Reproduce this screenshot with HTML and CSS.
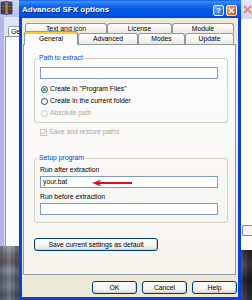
FILE: index.html
```html
<!DOCTYPE html>
<html>
<head>
<meta charset="utf-8">
<title>Advanced SFX options</title>
<link rel="stylesheet" href="styles.css">
</head>
<body>
<div class="desktop">
  <div class="win-left">
    <div class="wl-title">
      <svg class="wl-icon" width="13" height="14" viewBox="0 0 13 14">
        <rect x="1" y="1" width="11" height="3" fill="#7b3a8e" stroke="#222" stroke-width="0.6"/>
        <rect x="1" y="4" width="11" height="3" fill="#2f8f3a" stroke="#222" stroke-width="0.6"/>
        <rect x="1" y="7" width="11" height="3" fill="#c42b22" stroke="#222" stroke-width="0.6"/>
        <rect x="1" y="10" width="11" height="3" fill="#2c46a8" stroke="#222" stroke-width="0.6"/>
        <rect x="5" y="0.5" width="3" height="13" fill="#9a8a6a" stroke="#333" stroke-width="0.5"/>
      </svg>
    </div>
    <div class="wl-body">
      <div class="wl-tab">Ge</div>
      <div class="wl-panel"></div>
    </div>
  </div>
  <div class="photo photo-left"></div>

  <div class="win-right">
    <div class="wr-title">
      <svg width="9" height="9" viewBox="0 0 9 9"><path d="M1 1 L8 8 M8 1 L1 8" stroke="#e58a8a" stroke-width="2"/></svg>
    </div>
    <div class="wr-body"><div class="wr-btn"></div></div>
  </div>
  <div class="photo photo-right"></div>

  <div class="dialog">
    <div class="titlebar">
      <span class="title">Advanced SFX options</span>
      <div class="tb-btns">
        <span class="tb-btn tb-help">?</span>
        <span class="tb-btn tb-close">
          <svg width="7" height="7" viewBox="0 0 7 7"><path d="M1 1 L6 6 M6 1 L1 6" stroke="#fff" stroke-width="1.6"/></svg>
        </span>
      </div>
    </div>
    <div class="frame">
      <div class="tabs">
        <div class="tabrow upper">
          <div class="tab t-text">Text and icon</div>
          <div class="tab t-license">License</div>
          <div class="tab t-module">Module</div>
        </div>
        <div class="tabrow lower">
          <div class="tab sel t-general">General</div>
          <div class="tab t-advanced">Advanced</div>
          <div class="tab t-modes">Modes</div>
          <div class="tab t-update">Update</div>
        </div>
      </div>
      <div class="panel">
        <fieldset class="group g-path">
          <legend>Path to extract</legend>
          <div class="field"></div>
          <div class="opt first"><span class="radio on"></span><span>Create in "Program Files"</span></div>
          <div class="opt"><span class="radio"></span><span>Create in the current folder</span></div>
          <div class="opt disabled"><span class="radio off"></span><span>Absolute path</span></div>
        </fieldset>
        <div class="opt check disabled"><span class="checkbox">
          <svg width="5" height="5" viewBox="0 0 5 5"><path d="M0.5 2.5 L2 4 L4.5 0.8" stroke="#c6c3b4" stroke-width="1.1" fill="none"/></svg>
        </span><span>Save and restore paths</span></div>

        <fieldset class="group g-setup">
          <legend>Setup program</legend>
          <div class="lbl first">Run after extraction</div>
          <div class="field arrowed">your.bat
            <svg class="arrow" width="40" height="8" viewBox="0 0 40 8"><path d="M0 4 L9 0.8 L7.5 3 L40 3 L40 5 L7.5 5 L9 7.2 Z" fill="#d8121c"/></svg>
          </div>
          <div class="lbl">Run before extraction</div>
          <div class="field"></div>
        </fieldset>

        <div class="btn save">Save current settings as default</div>
      </div>
      <div class="buttons">
        <div class="btn dlg">OK</div>
        <div class="btn dlg">Cancel</div>
        <div class="btn dlg">Help</div>
      </div>
    </div>
  </div>
</div>
</body>
</html>
```

FILE: styles.css
```css
* { box-sizing: border-box; }
html, body { margin: 0; padding: 0; }
body {
  width: 252px;
  height: 300px;
  overflow: hidden;
  background: #3a4050;
  font-family: "Liberation Sans", Arial, sans-serif;
  font-size: 6.8px;
  line-height: 8px;
  color: #000;
}
.desktop { position: relative; width: 252px; height: 300px; }

/* background window left */
.win-left {
  position: absolute; left: 0; top: 0;
  width: 24px; height: 247px;
  display: flex; flex-direction: column;
  background: #e6e8f2;
}
.wl-title {
  height: 17px;
  background: linear-gradient(#cdd6f2, #b8c4ec);
  padding: 1px 0 0 0;
}
.wl-icon { display: block; }
.wl-body {
  flex: 1;
  display: flex; flex-direction: column;
  border-left: 4px solid #b1b8e8;
  padding-top: 9px;
  background: #dfe3f3;
}
.wl-tab {
  margin-left: 4px; width: 16px; height: 10px;
  border: 1px solid #919b9c; border-bottom: none;
  border-radius: 2px 0 0 0;
  background: #fff;
  padding-left: 2px; line-height: 9px;
}
.wl-panel {
  flex: 1; margin-left: 1px;
  border: 1px solid #919b9c; border-right: none;
  background: #fbfbf9;
}

/* background window right */
.win-right {
  position: absolute; left: 236px; top: 0;
  width: 16px; height: 250px;
  display: flex; flex-direction: column;
  background: #fff;
}
.wr-title {
  height: 19px;
  background: linear-gradient(#e3e6f3, #d2d8ef);
  padding: 5px 0 0 7px;
}
.wr-title svg { display: block; }
.wr-body {
  flex: 1; background: #fdfdfd;
  border-left: 1px solid #c8c8c8;
  padding-top: 206px; padding-left: 5px;
}
.wr-btn { width: 10px; height: 11px; border: 1px solid #7a8aa8; border-right: none; border-radius: 2px 0 0 2px; background: #f4f4f0; }

.photo { position: absolute; }
.photo-left {
  left: 0; top: 246px; width: 22px; height: 54px;
  background:
    linear-gradient(90deg, rgba(40,40,50,0.25) 0 3px, transparent 3px 7px, rgba(255,255,255,0.12) 7px 11px, transparent 11px 15px, rgba(30,30,40,0.3) 15px),
    linear-gradient(#8b90a0 0, #6e6a70 15%, #5b5660 30%, #7a8090 45%, #575f6c 60%, #6c7482 75%, #4e5664 90%, #5f6878 100%);
}
.photo-right {
  left: 240px; top: 250px; width: 12px; height: 50px;
  background:
    linear-gradient(90deg, rgba(255,255,255,0.1) 0 3px, transparent 3px 7px, rgba(0,0,0,0.3) 7px),
    linear-gradient(#2c2c34 0, #4a4850 30%, #222228 60%, #3a3c48 100%);
}

/* dialog */
.dialog {
  position: absolute; left: 19px; top: 0;
  width: 222px; height: 300px;
  display: flex; flex-direction: column;
}
.titlebar {
  height: 18px;
  display: flex; align-items: center; justify-content: space-between;
  padding: 2px 4px 0 3px;
  background: linear-gradient(#0a5fe6 0%, #3f8ef6 10%, #1b69ec 28%, #0058e6 55%, #0052df 85%, #0946c6 100%);
  color: #fff;
}
.title {
  font-weight: bold; font-size: 8px; line-height: 10px;
  text-shadow: 1px 1px 0 #0b2a80;
}
.tb-btns { display: flex; gap: 2px; }
.tb-btn {
  width: 11px; height: 11px;
  border: 1px solid #fff; border-radius: 2px;
  display: flex; align-items: center; justify-content: center;
  color: #fff; font-weight: bold; font-size: 8px; line-height: 9px;
}
.tb-help { background: linear-gradient(135deg, #6aa6fb, #2a66e2); }
.tb-close { background: linear-gradient(135deg, #f49a6a, #d6431a); }
.tb-close svg { display: block; }

.frame {
  flex: 1;
  border: 3px solid #0b3fd6; border-top: none;
  background: #ece9d8;
  padding: 5px 0 0 1px;
  display: flex; flex-direction: column;
}

/* tabs */
.tabs { display: flex; flex-direction: column; position: relative; z-index: 1; }
.tabrow { display: flex; }
.tabrow.upper { height: 10px; padding-left: 2px; }
.tabrow.lower { height: 11px; padding-left: 1px; align-items: flex-end; }
.tab {
  height: 100%;
  border: 1px solid #919b9c; border-bottom: none;
  border-radius: 3px 3px 0 0;
  background: linear-gradient(#ffffff, #f3f2ed 60%, #e9e8e2);
  text-align: center;
  line-height: 9px;
}
.upper .tab { line-height: 9px; }
.lower .tab { line-height: 10px; }
.t-text { width: 82px; }
.t-license { width: 65px; }
.t-module { width: 62px; margin-left: 0; }
.t-general { width: 54px; }
.t-advanced { width: 60px; }
.t-modes { width: 47px; }
.t-update { width: 49px; }
.tab.sel {
  height: 14px;
  margin-bottom: -1px;
  background: #fcfcfe;
  border-top: 1px solid #e68b2c;
  box-shadow: inset 0 2px 0 #ffc73c;
  padding-top: 2px;
  line-height: 10px;
  position: relative; z-index: 2;
}

/* panel */
.panel {
  width: 213px; height: 231px;
  border: 1px solid #919b9c;
  background: linear-gradient(#fcfcfe, #f5f4ef);
  padding: 9px 0 0 10px;
  display: flex; flex-direction: column; align-items: flex-start;
}
.group {
  width: 194px;
  margin: 0;
  padding: 0 9px 3px 5px;
  border: 1px solid #d0d0bf;
  border-radius: 3px;
  min-inline-size: 0;
}
.group legend {
  color: #0046d5;
  padding: 0 1px;
  margin-left: -2px;
  line-height: 8px;
}
.field {
  height: 12px;
  border: 1px solid #7f9db9;
  background: #fff;
  padding-left: 2px;
  line-height: 10px;
}
.g-path .field { margin-top: 5px; }
.opt {
  display: flex; align-items: center; gap: 2px;
  height: 12px; margin-left: 1px;
}
.opt.first { margin-top: 4px; }
.opt.disabled { color: #aca899; }
.radio {
  width: 7px; height: 7px; border-radius: 50%;
  border: 1px solid #1c5180;
  background: radial-gradient(circle at 60% 60%, #fff 30%, #dcdcd6 100%);
  display: flex; align-items: center; justify-content: center;
}
.radio.on::after {
  content: ""; width: 3px; height: 3px; border-radius: 50%;
  background: #2fa52f;
}
.radio.off { border-color: #cac8bb; background: #fff; }
.opt.check { margin-top: 3px; margin-left: 6px; }
.checkbox {
  width: 7px; height: 7px;
  border: 1px solid #cac8bb; background: #fff;
  display: flex; align-items: center; justify-content: center;
}
.checkbox svg { display: block; }

.g-setup { margin-top: 16px; padding-bottom: 7px; }
.lbl { height: 8px; line-height: 8px; margin-top: 5px; }
.lbl.first { margin-top: 4px; }
.g-setup .field { margin-top: 2px; }
.arrowed { position: relative; }
.arrow { position: absolute; left: 51px; top: 2px; }

/* buttons */
.btn {
  height: 13px;
  border: 1px solid #003c74;
  border-radius: 3px;
  background: linear-gradient(#ffffff, #f4f3ee 60%, #e3e0d6);
  box-shadow: inset -1px -1px 0 #d6d0c5;
  text-align: center;
  line-height: 11px;
}
.btn.save { width: 124px; margin-top: 15px; }
.buttons {
  display: flex; justify-content: flex-end; gap: 5px;
  margin-top: 6px; padding-right: 1px;
}
.btn.dlg { width: 45px; }
```
